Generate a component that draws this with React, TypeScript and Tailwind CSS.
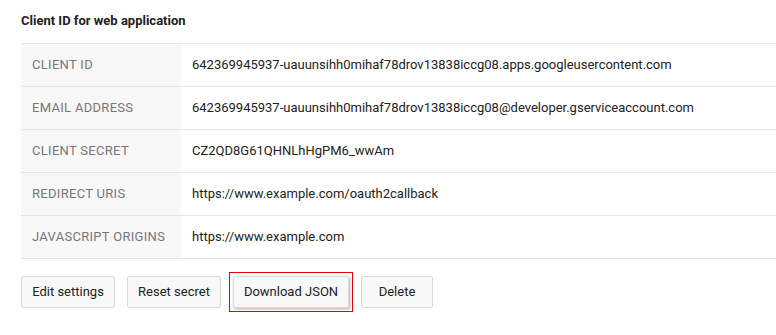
export default function App() {
  const rows: [string, string][] = [
    ["CLIENT ID", "642369945937-uauunsihh0mihaf78drov13838iccg08.apps.googleusercontent.com"],
    ["EMAIL ADDRESS", "642369945937-uauunsihh0mihaf78drov13838iccg08@developer.gserviceaccount.com"],
    ["CLIENT SECRET", "CZ2QD8G61QHNLhHgPM6_wwAm"],
    ["REDIRECT URIS", "https://www.example.com/oauth2callback"],
    ["JAVASCRIPT ORIGINS", "https://www.example.com"],
  ];
  const btn =
    "h-[32px] whitespace-nowrap rounded-[2px] border border-[#dcdcdc] bg-[#f8f8f8] text-[13px] text-[#222]";
  return (
    <div className="w-[776px] h-[335px] bg-white pl-[21px] pt-[11px]" style={{ fontFamily: "Roboto, 'Liberation Sans', sans-serif" }}>
      <div className="text-[13px] font-bold text-[#222] leading-[20px] h-[32px]">Client ID for web application</div>
      <div className="border-t border-[#e5e5e5]">
        {rows.map(([k, v]) => (
          <div key={k} className="flex h-[43px] border-b border-[#e5e5e5]">
            <div className="w-[160px] shrink-0 bg-[#f8f8f8] pl-[11px] flex items-center text-[13px] text-[#777] tracking-[0.3px]">{k}</div>
            <div className="pl-[11px] flex items-center text-[13px] text-[#222] whitespace-nowrap">{v}</div>
          </div>
        ))}
      </div>
      <div className="flex items-center mt-[13px] gap-[12px]">
        <button className={btn + " w-[94px]"}>Edit settings</button>
        <button className={btn + " w-[94px]"}>Reset secret</button>
        <div className="border border-[#e00] p-[3px] -mx-[4px]">
          <button className={btn + " w-[116px] shadow-[1px_1px_3px_rgba(0,0,0,0.35)]"}>Download JSON</button>
        </div>
        <button className={btn + " w-[72px]"}>Delete</button>
      </div>
    </div>
  );
}
